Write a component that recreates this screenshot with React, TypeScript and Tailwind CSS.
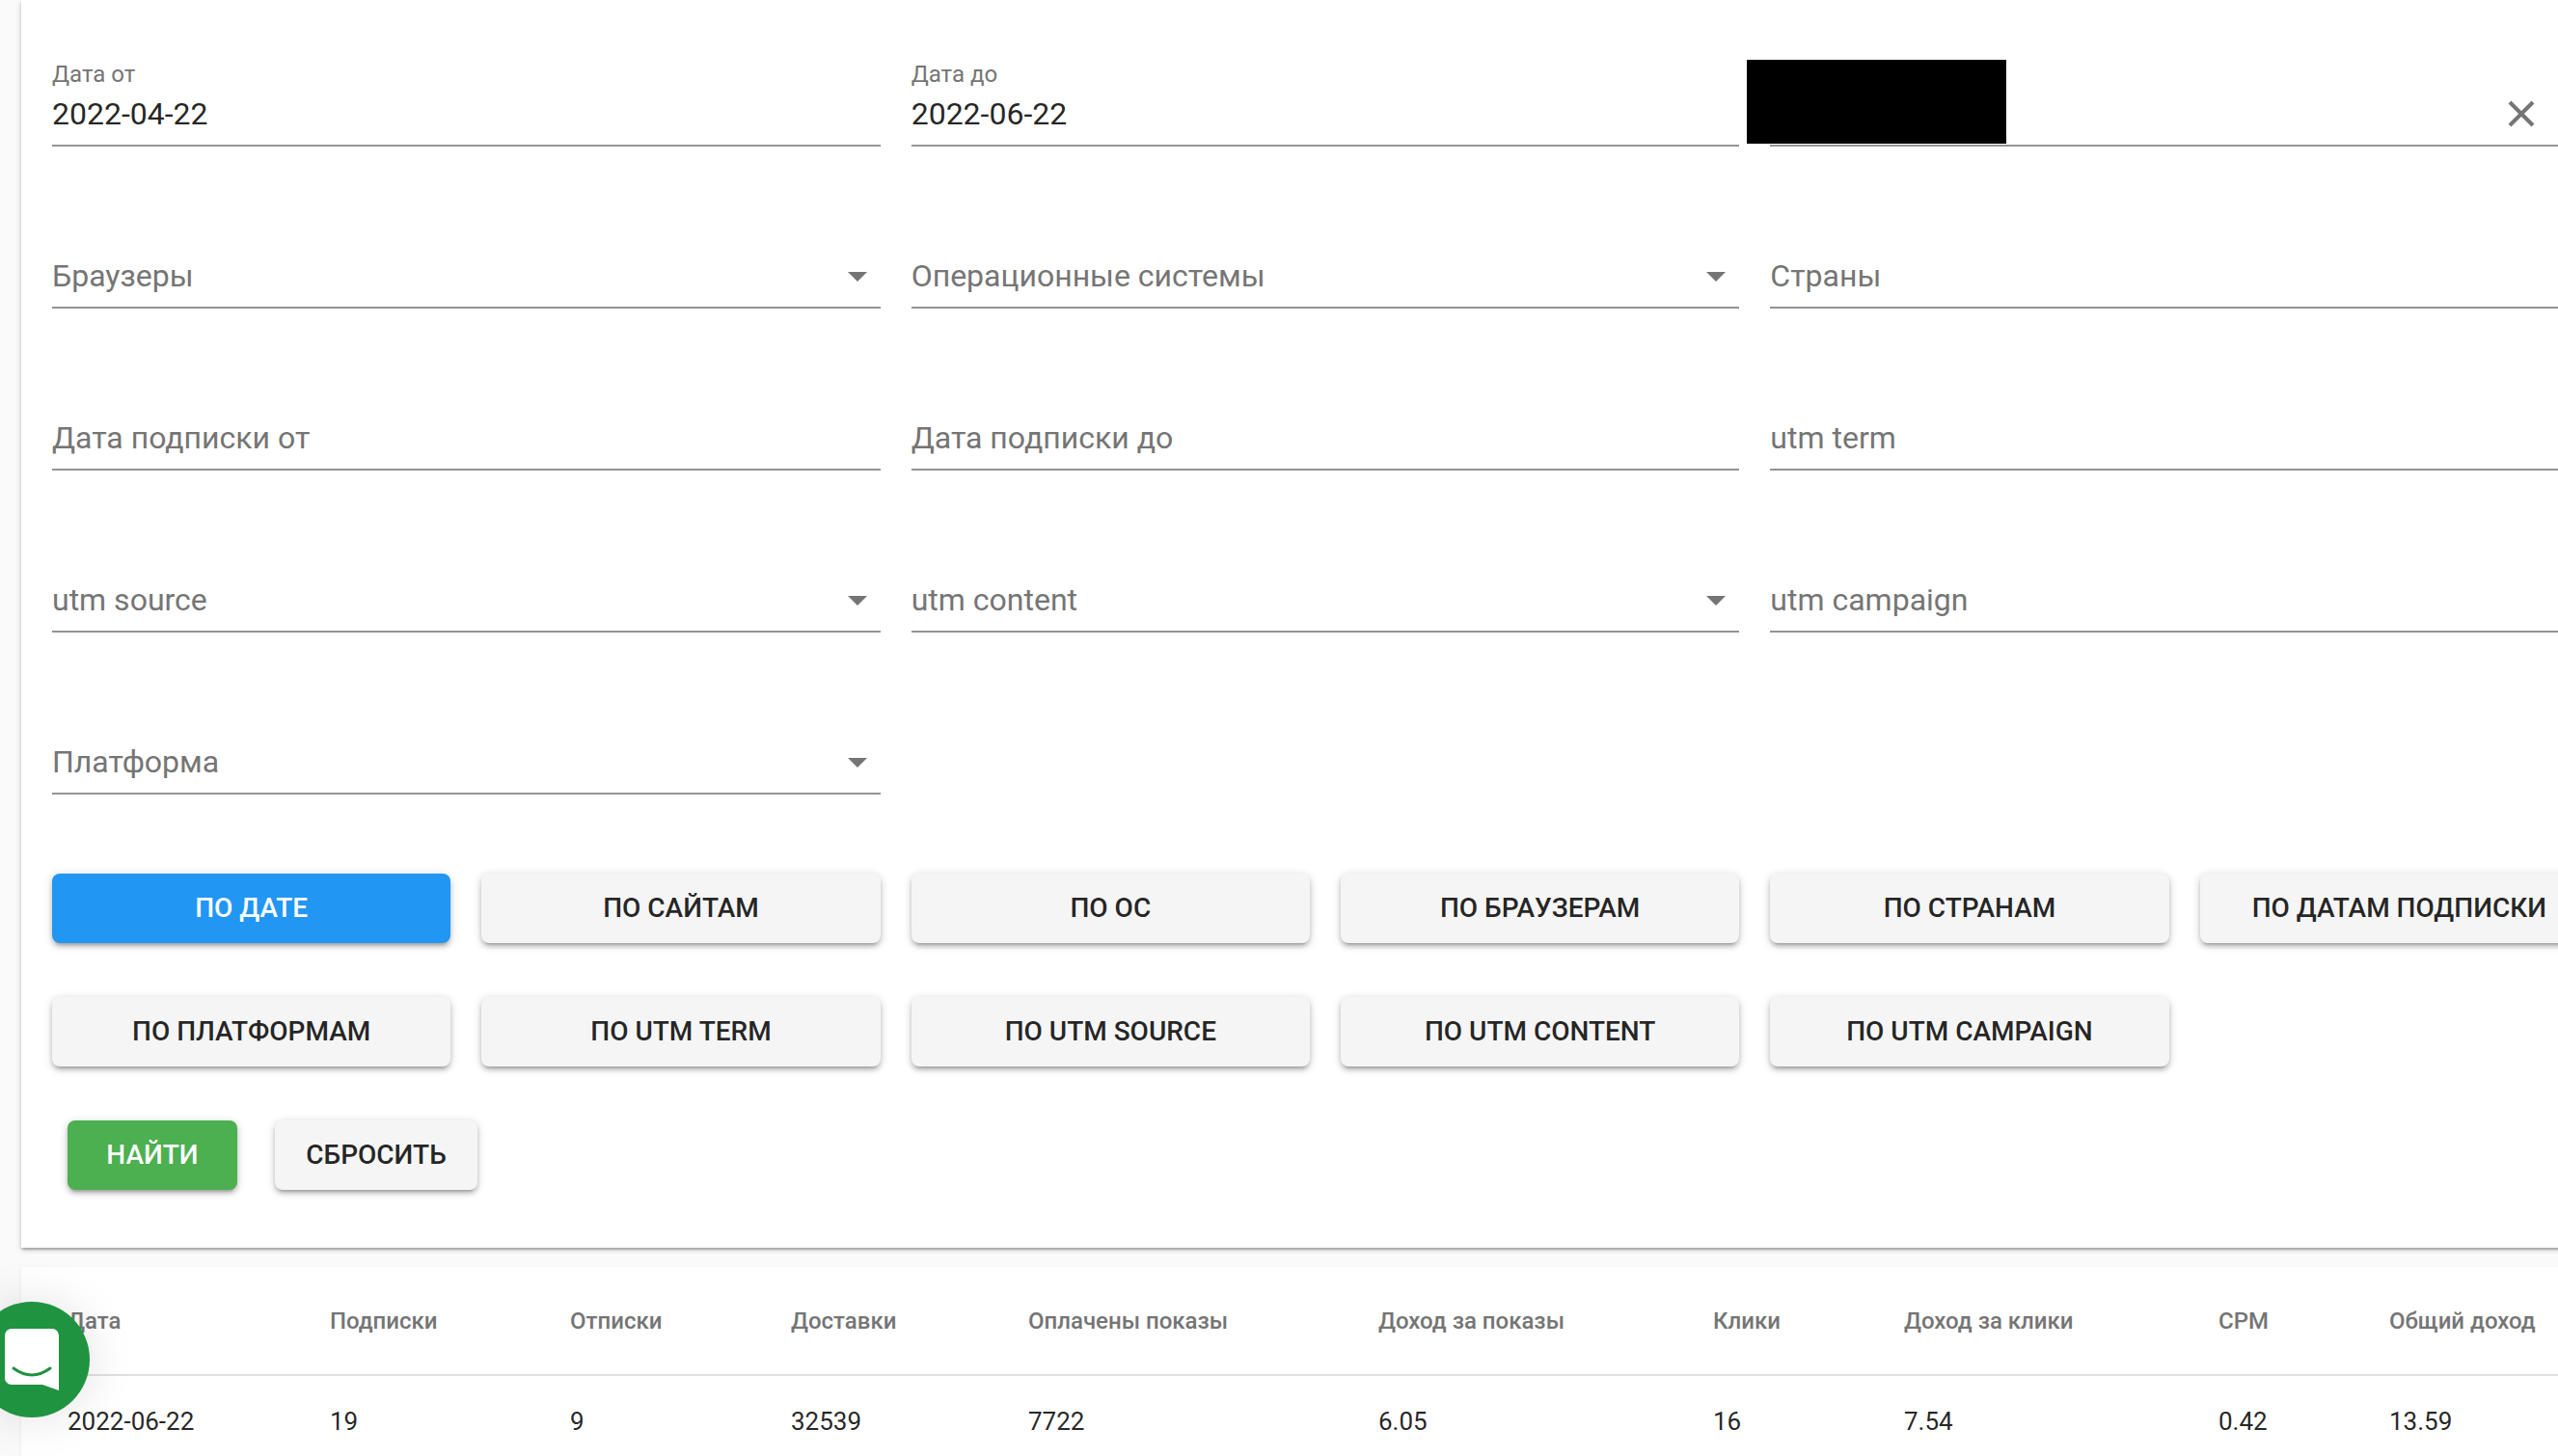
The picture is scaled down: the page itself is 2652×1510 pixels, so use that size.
const FONT = "font-['Roboto',sans-serif]";

function Arrow() {
  return (
    <svg className="absolute right-[14px] bottom-[26px] w-[20px] h-[10px]" viewBox="0 0 20 10">
      <path d="M0 0h20L10 10z" fill="#757575" />
    </svg>
  );
}

function Field({ label, value, placeholder, select, clear }: { label?: string; value?: string; placeholder?: string; select?: boolean; clear?: boolean }) {
  return (
    <div className="px-4">
      <div className="relative h-[96px] border-b-2 border-[#949494]">
        {label && <div className="absolute left-0 top-[7px] text-[24px] leading-[28px] text-[#757575]">{label}</div>}
        {value && <div className="absolute left-0 top-[43px] text-[32px] leading-[38px] text-[rgba(0,0,0,0.87)]">{value}</div>}
        {placeholder && <div className="absolute left-0 top-[43px] text-[32px] leading-[38px] text-[#757575]">{placeholder}</div>}
        {select && <Arrow />}
        {clear && (
          <svg className="absolute left-[765px] top-[48px] w-[28px] h-[28px]" viewBox="0 0 28 28">
            <path d="M2 2L26 26M26 2L2 26" stroke="#757575" strokeWidth="4" fill="none" />
          </svg>
        )}
      </div>
    </div>
  );
}

const shadow = "shadow-[0_2px_10px_0_rgba(0,0,0,0.2),0_4px_4px_0_rgba(0,0,0,0.14),0_6px_2px_-4px_rgba(0,0,0,0.12)]";

function Btn({ children, active }: { children: string; active?: boolean }) {
  return (
    <div className="px-4">
      <button className={`h-[72px] w-full whitespace-nowrap rounded-[8px] text-[28px] font-medium ${shadow} ${active ? "bg-[#2196f3] text-white" : "bg-[#f5f5f5] text-[rgba(0,0,0,0.87)]"}`}>
        {children}
      </button>
    </div>
  );
}

const heads = ["Дата", "Подписки", "Отписки", "Доставки", "Оплачены показы", "Доход за показы", "Клики", "Доход за клики", "CPM", "Общий доход"];
const cells = ["2022-06-22", "19", "9", "32539", "7722", "6.05", "16", "7.54", "0.42", "13.59"];
const widths = ["w-[320px] pl-[48px]", "w-[249px]", "w-[229px]", "w-[246px]", "w-[363px]", "w-[347px]", "w-[198px]", "w-[326px]", "w-[177px]", "w-[175px]"];

export default function App() {
  return (
    <div className={`relative h-[1510px] w-full overflow-hidden bg-[#fafafa] ${FONT}`}>
      <div className="ml-[22px] w-[2700px] bg-white pl-4 pt-[56px] pb-[60px] shadow-[0_2px_6px_0_rgba(0,0,0,0.2),0_2px_2px_0_rgba(0,0,0,0.14),0_4px_2px_-2px_rgba(0,0,0,0.12)]">
        <div className="grid w-[2672px] grid-cols-3 gap-y-[72px]">
          <Field label="Дата от" value="2022-04-22" />
          <Field label="Дата до" value="2022-06-22" />
          <div className="relative">
            <Field clear />
            <div className="absolute left-[-8px] top-[6px] h-[87px] w-[269px] bg-black" />
          </div>
          <Field placeholder="Браузеры" select />
          <Field placeholder="Операционные системы" select />
          <Field placeholder="Страны" />
          <Field placeholder="Дата подписки от" />
          <Field placeholder="Дата подписки до" />
          <Field placeholder="utm term" />
          <Field placeholder="utm source" select />
          <Field placeholder="utm content" select />
          <Field placeholder="utm campaign" />
          <Field placeholder="Платформа" select />
        </div>
        <div className="mt-[82px] grid w-[2672px] grid-cols-6 gap-y-[56px]">
          <Btn active>ПО ДАТЕ</Btn>
          <Btn>ПО САЙТАМ</Btn>
          <Btn>ПО ОС</Btn>
          <Btn>ПО БРАУЗЕРАМ</Btn>
          <Btn>ПО СТРАНАМ</Btn>
          <Btn>ПО ДАТАМ ПОДПИСКИ</Btn>
          <Btn>ПО ПЛАТФОРМАМ</Btn>
          <Btn>ПО UTM TERM</Btn>
          <Btn>ПО UTM SOURCE</Btn>
          <Btn>ПО UTM CONTENT</Btn>
          <Btn>ПО UTM CAMPAIGN</Btn>
        </div>
        <div className="mt-[56px] ml-[32px] flex gap-[39px]">
          <button className={`h-[72px] w-[176px] rounded-[8px] bg-[#4caf50] text-[28px] font-medium text-white ${shadow}`}>НАЙТИ</button>
          <button className={`h-[72px] w-[210px] rounded-[8px] bg-[#f5f5f5] text-[28px] font-medium text-[rgba(0,0,0,0.87)] ${shadow}`}>СБРОСИТЬ</button>
        </div>
      </div>
      <div className="ml-[22px] mt-[20px] h-[300px] w-[2700px] bg-white shadow-[0_1px_4px_0_rgba(0,0,0,0.06)]">
        <table className="table-fixed border-collapse text-left">
          <thead>
            <tr className="h-[112px] border-b-2 border-[#e0e0e0]">
              {heads.map((h, i) => (
                <th key={h} className={`${widths[i]} p-0 text-[24px] font-medium whitespace-nowrap text-[#757575]`}>{h}</th>
              ))}
            </tr>
          </thead>
          <tbody>
            <tr className="h-[96px]">
              {cells.map((c, i) => (
                <td key={i} className={`${widths[i]} p-0 text-[26px] text-[rgba(0,0,0,0.87)]`}>{c}</td>
              ))}
            </tr>
          </tbody>
        </table>
      </div>
      <div className="absolute left-[-27px] top-[1350px] flex h-[120px] w-[120px] items-center justify-center rounded-full bg-[#1f9340] shadow-[0_0_50px_rgba(0,0,0,0.12)]">
        <svg className="w-[56px] h-[64px]" viewBox="0 0 56 64">
          <path d="M7 0H49a7 7 0 0 1 7 7V64L39 58H7a7 7 0 0 1-7-7V7a7 7 0 0 1 7-7z" fill="#fff" />
          <path d="M9 41Q28 55 47 41" stroke="#1f9340" strokeWidth="3" fill="none" strokeLinecap="round" />
        </svg>
      </div>
    </div>
  );
}
